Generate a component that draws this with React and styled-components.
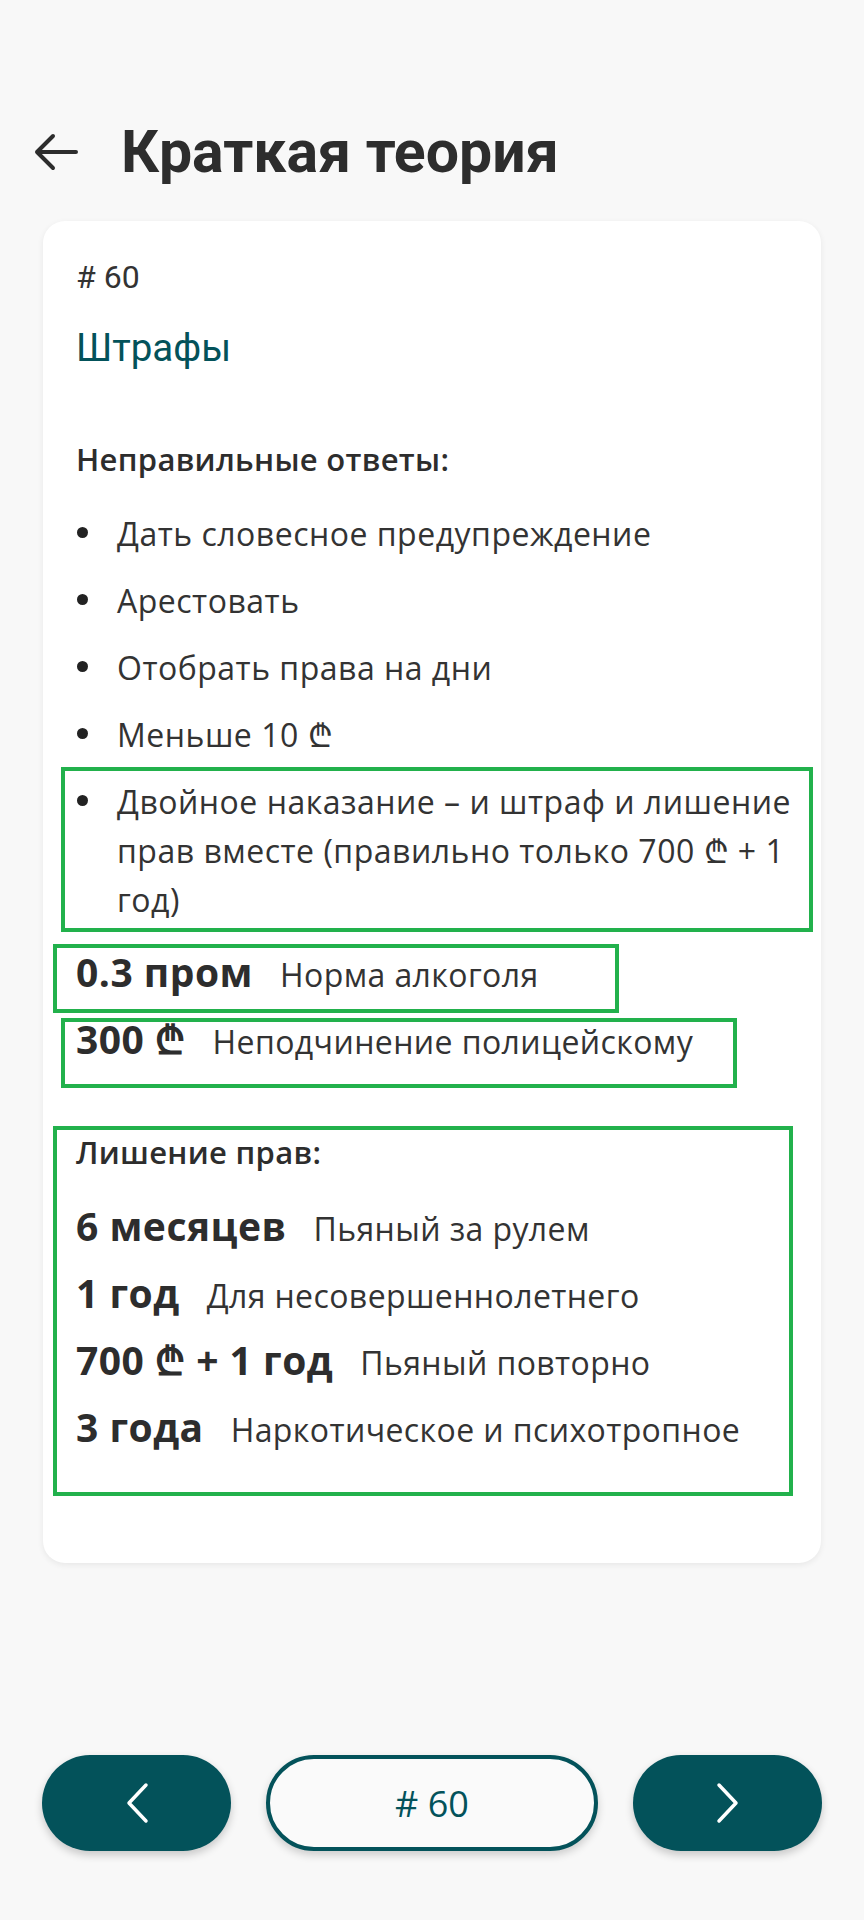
import React from 'react'
import styled, { createGlobalStyle } from 'styled-components'

const teal = '#03525a'
const ink = '#2d2d2d'
const markGreen = '#22b14c'

const wrongAnswers = [
   { text: 'Дать словесное предупреждение' },
   { text: 'Арестовать' },
   { text: 'Отобрать права на дни' },
   { text: 'Меньше 10 ₾' },
   {
      text: 'Двойное наказание – и штраф и лишение прав вместе (правильно только 700 ₾ + 1 год)',
      mark: { top: -10, right: -20, bottom: -8, left: -15 },
   },
]

const quickFacts = [
   { value: '0.3 пром', label: 'Норма алкоголя', gap: 20, mark: { top: 0, right: 174, bottom: -10, left: -23 } },
   { value: '300 ₾', label: 'Неподчинение полицейскому', gap: 8, mark: { top: 7, right: 56, bottom: -18, left: -15 } },
]

const suspensions = [
   { value: '6 месяцев', label: 'Пьяный за рулем' },
   { value: '1 год', label: 'Для несовершеннолетнего' },
   { value: '700 ₾ + 1 год', label: 'Пьяный повторно' },
   { value: '3 года', label: 'Наркотическое и психотропное' },
]

const App = () => {
   return (
      <>
         <GlobalStyle />
         <Page>
            <Header>
               <BackButton aria-label="Назад">
                  <svg width="46" height="40" viewBox="0 0 46 40" fill="none">
                     <path d="M43 20H4M20 4L4 20l16 16" stroke="currentColor" strokeWidth="4" strokeLinecap="round" strokeLinejoin="round" />
                  </svg>
               </BackButton>
               <Title>Краткая теория</Title>
            </Header>

            <Card>
               <Number># 60</Number>
               <Topic>Штрафы</Topic>

               <SectionTitle $gap={66}>Неправильные ответы:</SectionTitle>
               <BulletList>
                  {wrongAnswers.map((item) => (
                     <Bullet key={item.text}>
                        {item.text}
                        {item.mark && <Mark {...toInsets(item.mark)} />}
                     </Bullet>
                  ))}
               </BulletList>

               {quickFacts.map((fact) => (
                  <Marked key={fact.value} $gap={fact.gap}>
                     <Fact>
                        <FactValue>{fact.value}</FactValue>
                        <FactLabel>{fact.label}</FactLabel>
                     </Fact>
                     <Mark {...toInsets(fact.mark)} />
                  </Marked>
               ))}

               <Marked $gap={60}>
                  <SectionTitle $gap={0}>Лишение прав:</SectionTitle>
                  <FactList>
                     {suspensions.map((fact) => (
                        <Fact key={fact.value}>
                           <FactValue>{fact.value}</FactValue>
                           <FactLabel>{fact.label}</FactLabel>
                        </Fact>
                     ))}
                  </FactList>
                  <Mark $top={-4} $right={0} $bottom={-38} $left={-23} />
               </Marked>
            </Card>

            <Nav>
               <NavButton aria-label="Предыдущий">
                  <svg width="24" height="42" viewBox="0 0 24 42" fill="none">
                     <path d="M21 3L4 21l17 18" stroke="#fff" strokeWidth="3.5" strokeLinecap="round" strokeLinejoin="round" />
                  </svg>
               </NavButton>
               <CounterButton># 60</CounterButton>
               <NavButton aria-label="Следующий">
                  <svg width="24" height="42" viewBox="0 0 24 42" fill="none">
                     <path d="M3 3l17 18L3 39" stroke="#fff" strokeWidth="3.5" strokeLinecap="round" strokeLinejoin="round" />
                  </svg>
               </NavButton>
            </Nav>
         </Page>
      </>
   )
}

const toInsets = ({ top, right, bottom, left }) => ({ $top: top, $right: right, $bottom: bottom, $left: left })

const GlobalStyle = createGlobalStyle`
   * {
      box-sizing: border-box;
   }
   body {
      margin: 0;
      background: #f8f8f8;
      font-family: 'Open Sans', 'Noto Sans', sans-serif;
   }
`

const Page = styled.div`
   width: 864px;
   min-height: 1920px;
   display: flex;
   flex-direction: column;
   background: #f8f8f8;
`

const Header = styled.header`
   display: flex;
   align-items: center;
   gap: 42px;
   height: 80px;
   margin-top: 112px;
   padding-left: 33px;
`

const BackButton = styled.button`
   display: flex;
   padding: 0;
   border: none;
   background: none;
   color: ${ink};
   cursor: pointer;
`

const Title = styled.h1`
   margin: 0;
   font: 700 59px/80px Roboto, sans-serif;
   color: ${ink};
`

const Card = styled.section`
   margin: 29px 43px 0;
   padding: 40px 28px 105px 33px;
   background: #fff;
   border-radius: 22px;
   box-shadow: 0 2px 6px rgba(0, 0, 0, 0.07);
`

const Number = styled.div`
   font: 400 32px/32px Roboto, sans-serif;
   color: #333;
`

const Topic = styled.h2`
   margin: 32px 0 0;
   font: 400 38.5px/46px Roboto, sans-serif;
   color: ${teal};
`

const SectionTitle = styled.h3`
   margin: ${({ $gap }) => $gap}px 0 0;
   font: 600 31px/44px 'Open Sans', sans-serif;
   letter-spacing: 0.3px;
   color: ${ink};
`

const BulletList = styled.ul`
   display: flex;
   flex-direction: column;
   gap: 18px;
   margin: 28px 0 0;
   padding: 0;
   list-style: none;
`

const Bullet = styled.li`
   position: relative;
   padding-left: 41px;
   font: 400 32px/49px 'Open Sans', sans-serif;
   letter-spacing: 0.5px;
   color: #333;

   &::before {
      content: '';
      position: absolute;
      left: 1px;
      top: 18px;
      width: 11px;
      height: 11px;
      border-radius: 50%;
      background: #222;
   }
`

const Marked = styled.div`
   position: relative;
   margin-top: ${({ $gap }) => $gap}px;
`

const Mark = styled.span`
   position: absolute;
   top: ${({ $top }) => $top}px;
   right: ${({ $right }) => $right}px;
   bottom: ${({ $bottom }) => $bottom}px;
   left: ${({ $left }) => $left}px;
   border: 4px solid ${markGreen};
   pointer-events: none;
`

const FactList = styled.div`
   display: flex;
   flex-direction: column;
   gap: 8px;
   margin-top: 24px;
`

const Fact = styled.div`
   display: flex;
   align-items: baseline;
   gap: 27px;
   line-height: 56px;
`

const FactValue = styled.span`
   font: 700 39px/56px 'Open Sans', sans-serif;
   letter-spacing: 0.5px;
   color: ${ink};
   white-space: nowrap;
`

const FactLabel = styled.span`
   font: 400 32px/56px 'Open Sans', sans-serif;
   letter-spacing: 0.4px;
   color: #333;
`

const Nav = styled.nav`
   display: grid;
   grid-template-columns: 189px 1fr 189px;
   gap: 35px;
   margin-top: 192px;
   padding: 0 42px;
`

const NavButton = styled.button`
   display: flex;
   align-items: center;
   justify-content: center;
   height: 96px;
   padding: 0;
   border: none;
   border-radius: 48px;
   background: ${teal};
   box-shadow: 0 4px 8px rgba(0, 0, 0, 0.2);
   cursor: pointer;
`

const CounterButton = styled.button`
   height: 96px;
   padding: 0;
   border: 4px solid ${teal};
   border-radius: 48px;
   background: #fafafa;
   box-shadow: 0 4px 8px rgba(0, 0, 0, 0.18);
   font: 400 36px 'Open Sans', sans-serif;
   color: ${teal};
   cursor: pointer;
`

export default App
